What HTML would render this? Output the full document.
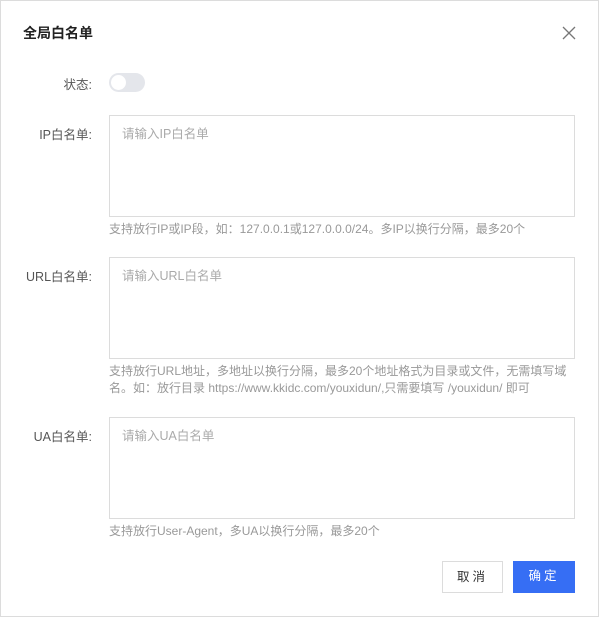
<!DOCTYPE html>
<html><head><meta charset="utf-8"><style>
*{box-sizing:border-box;margin:0;padding:0}
body{width:600px;height:619px;background:#fff;font-family:"Liberation Sans","Noto Sans CJK SC",sans-serif;position:relative;overflow:hidden}
.frame{position:absolute;left:0;top:0;width:599px;height:617px;border:1px solid #dcdcdc}
.abs{position:absolute}
.title{left:23px;top:23px;font-size:14px;font-weight:bold;color:#222}
.lbl{right:508px;font-size:12.5px;color:#555;white-space:nowrap}
.ta{left:109px;width:466px;height:102px;border:1px solid #dcdcdc}
.ph{position:absolute;left:12px;top:7px;font-size:12.5px;color:#aaa}
.hint{left:109px;font-size:12px;color:#999;white-space:nowrap;line-height:17px}
.btn{top:561px;height:32px;font-size:12.5px;text-align:center;line-height:31px;letter-spacing:3px}
</style></head><body>
<div class="frame"></div>
<div class="abs title">全局白名单</div>
<svg class="abs" style="left:562px;top:26px" width="14" height="14" viewBox="0 0 14 14"><path d="M1 1L13 13M13 1L1 13" stroke="#777" stroke-width="1.3"/></svg>
<div class="abs lbl" style="top:74px">状态:</div>
<div class="abs" style="left:109px;top:73px;width:36px;height:19px;border-radius:10px;background:#e4e6eb"><div style="position:absolute;left:2px;top:2px;width:15px;height:15px;border-radius:50%;background:#fff"></div></div>
<div class="abs lbl" style="top:124px">IP白名单:</div>
<div class="abs ta" style="top:115px"><span class="ph">请输入IP白名单</span></div>
<div class="abs hint" style="top:221px">支持放行IP或IP段，如：127.0.0.1或127.0.0.0/24。多IP以换行分隔，最多20个</div>
<div class="abs lbl" style="top:266px">URL白名单:</div>
<div class="abs ta" style="top:257px"><span class="ph">请输入URL白名单</span></div>
<div class="abs hint" style="top:363px">支持放行URL地址，多地址以换行分隔，最多20个地址格式为目录或文件，无需填写域<br>名。如：放行目录 https://www.kkidc.com/youxidun/,只需要填写 /youxidun/ 即可</div>
<div class="abs lbl" style="top:426px">UA白名单:</div>
<div class="abs ta" style="top:417px"><span class="ph">请输入UA白名单</span></div>
<div class="abs hint" style="top:523px">支持放行User-Agent，多UA以换行分隔，最多20个</div>
<div class="abs btn" style="left:442px;width:61px;border:1px solid #dcdcdc;color:#333">取消</div>
<div class="abs btn" style="left:513px;width:62px;background:#366ef4;color:#fff">确定</div>
</body></html>
